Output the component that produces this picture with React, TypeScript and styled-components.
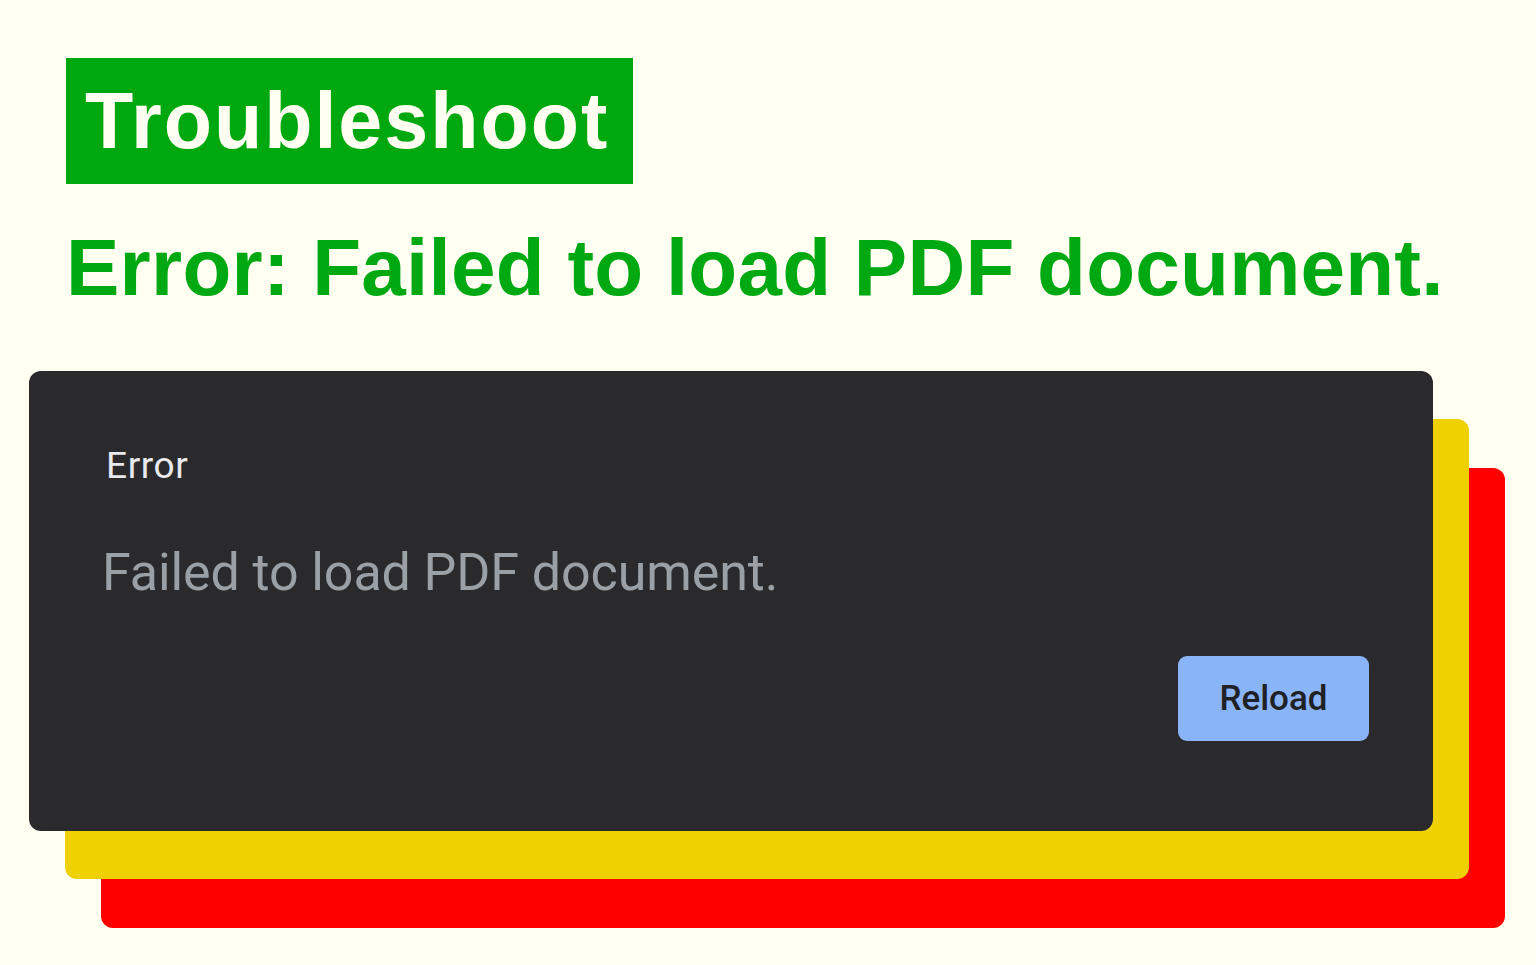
import React from 'react';
import styled, { createGlobalStyle } from 'styled-components';

const GlobalStyle = createGlobalStyle`
  html, body {
    margin: 0;
    padding: 0;
    background: #fffff2;
  }
  body {
    font-family: "Liberation Sans", Arial, sans-serif;
  }
`;

const Page = styled.main`
  width: 1536px;
  height: 965px;
  box-sizing: border-box;
  padding: 58px 0 0 29px;
  display: flex;
  flex-direction: column;
  align-items: flex-start;
  overflow: hidden;
`;

const TitleBadge = styled.h1`
  margin: 0 0 0 37px;
  height: 126px;
  padding: 0 24px 0 19px;
  background: #00a80f;
  color: #fffff2;
  font-family: "Liberation Sans", Arial, sans-serif;
  font-weight: 700;
  font-size: 79px;
  line-height: 126px;
  letter-spacing: 2px;
`;

const Headline = styled.h2`
  margin: 38px 0 0 37px;
  color: #00a811;
  font-family: "Liberation Sans", Arial, sans-serif;
  font-weight: 700;
  font-size: 80px;
  line-height: 92px;
  letter-spacing: 0.25px;
  white-space: nowrap;
`;

// the yellow and red sheets are shadows of the dialog
const Dialog = styled.section`
  margin-top: 57px;
  width: 1404px;
  height: 460px;
  box-sizing: border-box;
  padding: 75px 64px 90px 73px;
  background: #2a2a2d;
  border-radius: 12px;
  box-shadow: 36px 48px 0 #efd000, 72px 97px 0 #ff0000;
  display: flex;
  flex-direction: column;
  font-family: Roboto, "Noto Sans", sans-serif;
`;

const DialogTitle = styled.div`
  margin-left: 4px;
  color: #e8eaed;
  font-size: 37px;
  line-height: 40px;
  letter-spacing: 0.6px;
`;

const DialogBody = styled.p`
  margin: 56px 0 0;
  color: #9aa0a6;
  font-size: 52px;
  line-height: 61px;
  letter-spacing: -0.1px;
`;

const Actions = styled.div`
  margin-top: auto;
  display: flex;
  justify-content: flex-end;
`;

const ReloadButton = styled.button`
  width: 191px;
  height: 85px;
  border: none;
  border-radius: 9px;
  background: #8ab4f8;
  color: #202124;
  font-family: Roboto, "Noto Sans", sans-serif;
  font-weight: 500;
  font-size: 35px;
  cursor: pointer;
`;

export default function App() {
  return (
    <>
      <GlobalStyle />
      <Page>
        <TitleBadge>Troubleshoot</TitleBadge>
        <Headline>Error: Failed to load PDF document.</Headline>
        <Dialog>
          <DialogTitle>Error</DialogTitle>
          <DialogBody>Failed to load PDF document.</DialogBody>
          <Actions>
            <ReloadButton>Reload</ReloadButton>
          </Actions>
        </Dialog>
      </Page>
    </>
  );
}
